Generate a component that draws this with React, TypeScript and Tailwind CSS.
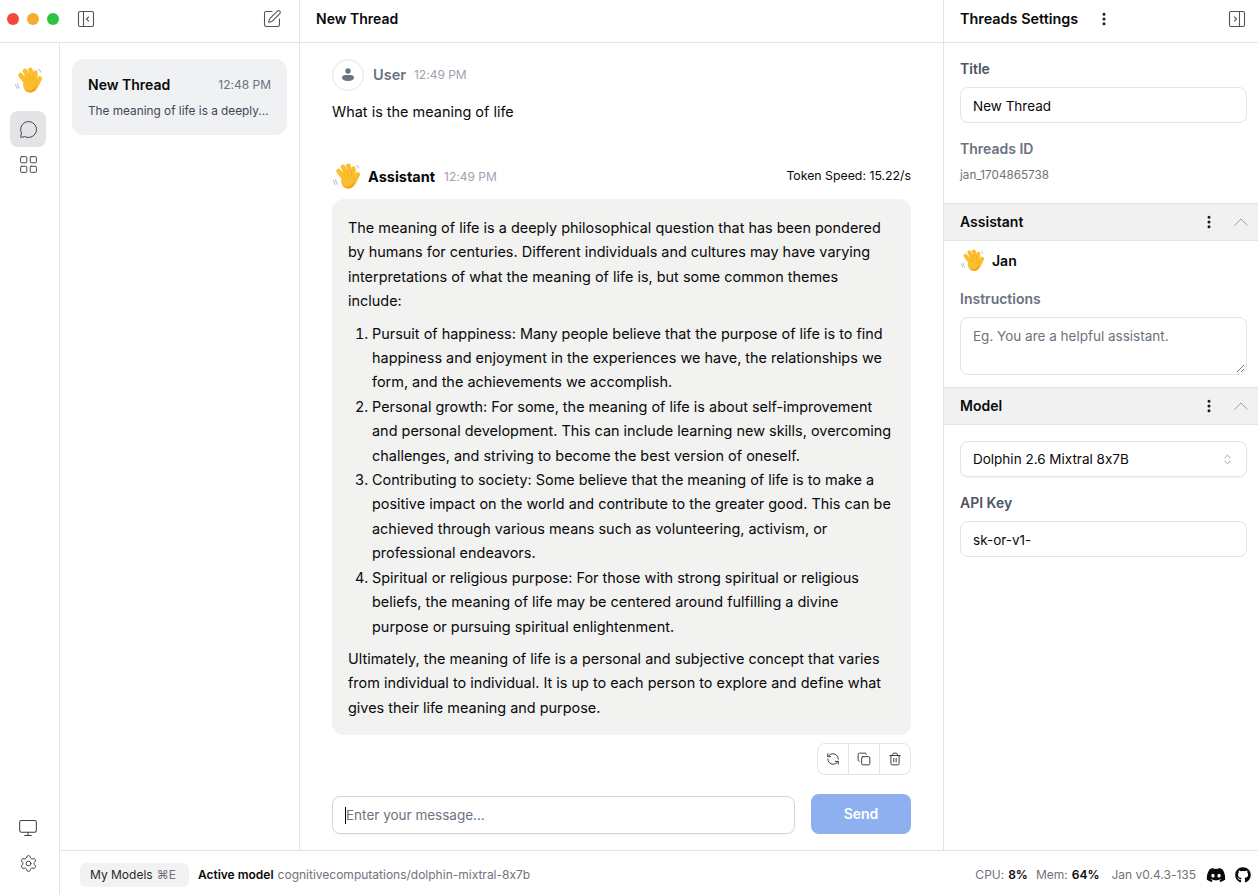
import {
  ChevronUp,
  ChevronsUpDown,
  Copy,
  EllipsisVertical,
  LayoutGrid,
  MessageCircle,
  Monitor,
  RefreshCcw,
  Settings,
  SquarePen,
  Trash2,
} from 'lucide-react'
import { FaDiscord, FaGithub } from 'react-icons/fa'

const ITEMS = [
  'Pursuit of happiness: Many people believe that the purpose of life is to find happiness and enjoyment in the experiences we have, the relationships we form, and the achievements we accomplish.',
  'Personal growth: For some, the meaning of life is about self-improvement and personal development. This can include learning new skills, overcoming challenges, and striving to become the best version of oneself.',
  'Contributing to society: Some believe that the meaning of life is to make a positive impact on the world and contribute to the greater good. This can be achieved through various means such as volunteering, activism, or professional endeavors.',
  'Spiritual or religious purpose: For those with strong spiritual or religious beliefs, the meaning of life may be centered around fulfilling a divine purpose or pursuing spiritual enlightenment.',
]

function WaveEmoji({ size }: { size: number }) {
  return (
    <svg width={size} height={size} viewBox="0 0 28 28" fill="none" className="shrink-0">
      <path d="M3.500 16.500c.2 1.800.8 3.300 1.800 4.600M1.500 17.500c.3 1.400.8 2.700 1.600 3.800M24.500 2.500c1.100.5 1.900 1.400 2.400 2.600" stroke="#b4c2cc" strokeWidth="1.100" strokeLinecap="round" />
      <g stroke="#fbbf2e" strokeWidth="4.600" strokeLinecap="round">
        <path d="M6.500 8l7.500 10" />
        <path d="M11 3.800l5 11" />
        <path d="M16.300 2.800l2.700 11" />
        <path d="M21.500 5.500l-.5 9" />
        <path d="M25.800 11.500l-3.500 7" />
      </g>
      <circle cx="16.500" cy="18" r="7.400" fill="#fbbf2e" />
      <path d="M22.800 18c.3 4-2.200 7.200-6.300 7.400-3 .1-5-1.300-6.200-3.200 2.500 1.500 6 1.700 8.700-.2 1.800-1.200 3-2.700 3.800-4z" fill="#f3a31c" />
      <path d="M10.500 9.500l3.800 5.500M14.400 7.500l2.500 6M19 7l.5 6M22.900 14.200l-.6 3" stroke="#eb9d1a" strokeWidth=".6" strokeLinecap="round" />
    </svg>
  )
}

function PanelIcon({ side }: { side: 'left' | 'right' }) {
  return (
    <svg width="18" height="18" viewBox="0 0 18 18" fill="none" stroke="#52525b" strokeWidth="1.100" strokeLinecap="round" strokeLinejoin="round">
      <rect x="1.500" y="1.500" width="15" height="15" rx="1.500" />
      {side === 'left' ? (
        <>
          <path d="M6.500 1.500v15" />
          <path d="M11.500 7l-2 2 2 2" />
        </>
      ) : (
        <>
          <path d="M11.500 1.500v15" />
          <path d="M6.500 7l2 2-2 2" />
        </>
      )}
    </svg>
  )
}

function SectionHeader({ title }: { title: string }) {
  return (
    <div className="flex h-[38px] items-center justify-between border-y border-[#e4e4e7] bg-[#f1f1f1] pl-4 pr-[5px]">
      <span className="text-sm font-semibold text-[#09090b]">{title}</span>
      <div className="flex items-center gap-3">
        <EllipsisVertical size={16} strokeWidth={2.500} className="text-[#18181b]" />
        <ChevronUp size={24} strokeWidth={1} className="text-[#a1a1aa]" />
      </div>
    </div>
  )
}

function ActionButton({ children, last }: { children: React.ReactNode; last?: boolean }) {
  return (
    <div className={`flex h-full items-center justify-center text-[#27272a] ${last ? 'w-[30px]' : 'w-[31px] border-r border-[#e4e4e7]'}`}>
      {children}
    </div>
  )
}

export default function App() {
  return (
    <div className="flex h-[894px] w-[1258px] flex-col overflow-hidden bg-white font-['Inter',sans-serif] text-[#09090b] [font-feature-settings:'calt'_0]">
      <header className="flex h-[43px] shrink-0 border-b border-[#e4e4e7]">
        <div className="flex w-[300px] items-center border-r border-[#e4e4e7] pb-1 pl-[7px] pr-[17px]">
          <div className="flex gap-2">
            <span className="h-3 w-3 rounded-full bg-[#f1483f]" />
            <span className="h-3 w-3 rounded-full bg-[#f6ac31]" />
            <span className="h-3 w-3 rounded-full bg-[#2cc443]" />
          </div>
          <div className="ml-[18px]">
            <PanelIcon side="left" />
          </div>
          <SquarePen size={20} strokeWidth={1.250} className="ml-auto text-[#52525b]" />
        </div>
        <div className="flex flex-1 items-center border-r border-[#e4e4e7] pb-1 pl-4 text-sm font-semibold">New Thread</div>
        <div className="flex w-[314px] items-center pb-1 pl-4 pr-3">
          <span className="text-[14.4px] font-semibold">Threads Settings</span>
          <EllipsisVertical size={16} strokeWidth={2.500} className="ml-[18px] text-[#18181b]" />
          <div className="ml-auto">
            <PanelIcon side="right" />
          </div>
        </div>
      </header>

      <div className="flex min-h-0 flex-1">
        <aside className="flex w-[60px] shrink-0 flex-col items-center border-r border-[#e4e4e7] pb-[21px] pr-[3px] pt-6">
          <WaveEmoji size={28} />
          <div className="mt-[16px] flex h-9 w-9 items-center justify-center rounded-lg bg-[#e4e4e7]">
            <MessageCircle size={19} strokeWidth={1.250} className="text-[#3f3f46]" />
          </div>
          <LayoutGrid size={21} strokeWidth={1.100} className="mt-[7px] text-[#3f3f46]" />
          <Monitor size={20} strokeWidth={1.250} className="mt-auto text-[#3f3f46]" />
          <Settings size={19} strokeWidth={1.250} className="mt-[16px] text-[#3f3f46]" />
        </aside>

        <div className="flex min-w-0 flex-1 flex-col">
          <div className="flex min-h-0 flex-1">
            <div className="w-[240px] shrink-0 border-r border-[#e4e4e7] px-3 pt-4">
              <div className="flex h-[76px] flex-col justify-center rounded-xl bg-[#f0f1f3] px-4">
                <div className="flex items-center justify-between pt-px">
                  <span className="text-sm font-semibold">New Thread</span>
                  <span className="text-xs text-[#6b7280]">12:48 PM</span>
                </div>
                <p className="mt-[8px] whitespace-nowrap text-[11.8px] text-[#3f4654]">The meaning of life is a deeply...</p>
              </div>
            </div>

            <main className="flex min-w-0 flex-1 flex-col border-r border-[#e4e4e7] pl-8 pr-8">
              <div className="flex items-center pt-[16px]">
                <div className="flex h-8 w-8 items-center justify-center rounded-full border border-[#e4e4e7]">
                  <svg width="14" height="16" viewBox="0 0 14 16" fill="#6b7280">
                    <circle cx="7" cy="4" r="2.700" />
                    <path d="M1 10.500C1 8.500 3 8 7 8s6 .5 6 2.500c0 2-2 3.500-6 3.500s-6-1.500-6-3.500z" />
                  </svg>
                </div>
                <span className="ml-[9px] text-[14.5px] font-semibold text-[#6b7280]">User</span>
                <span className="ml-2 text-xs text-[#9ca3af]">12:49 PM</span>
              </div>
              <p className="mt-[9px] text-[14.45px] leading-[24.5px]">What is the meaning of life</p>

              <div className="mt-[38px] flex items-center">
                <WaveEmoji size={28} />
                <span className="ml-2 text-[14.5px] font-bold">Assistant</span>
                <span className="ml-[9px] text-xs text-[#9ca3af]">12:49 PM</span>
                <span className="ml-auto text-[12.3px]">Token Speed: 15.22/s</span>
              </div>

              <div className="mt-2 rounded-xl bg-[#f2f2f0] px-4 pb-[14.5px] pt-[17.5px] text-[14.45px] leading-[24.4px]">
                <p className="pr-2">
                  The meaning of life is a deeply philosophical question that has been pondered by humans for centuries.
                  Different individuals and cultures may have varying interpretations of what the meaning of life is, but
                  some common themes include:
                </p>
                <ol className="mb-2 mt-2 list-decimal pl-6">
                  {ITEMS.map((item) => (
                    <li key={item}>{item}</li>
                  ))}
                </ol>
                <p>
                  Ultimately, the meaning of life is a personal and subjective concept that varies from individual to
                  individual. It is up to each person to explore and define what gives their life meaning and purpose.
                </p>
              </div>

              <div className="mt-2 flex justify-end">
                <div className="flex h-8 overflow-hidden rounded-lg border border-[#e4e4e7]">
                  <ActionButton>
                    <RefreshCcw size={14} strokeWidth={1.500} />
                  </ActionButton>
                  <ActionButton>
                    <Copy size={14} strokeWidth={1.500} />
                  </ActionButton>
                  <ActionButton last>
                    <Trash2 size={14} strokeWidth={1.500} />
                  </ActionButton>
                </div>
              </div>

              <div className="mt-[19px] flex items-end gap-4">
                <div className="flex h-[38px] flex-1 items-center rounded-lg border border-[#d4d4d8] px-3 pt-px text-[13.5px] text-[#6b7280] shadow-[0_1px_1px_rgba(0,0,0,0.04)]">
                  <span className="h-[17px] w-px bg-[#09090b]" />
                  Enter your message...
                </div>
                <div className="flex h-[40px] w-[100px] items-center justify-center rounded-lg bg-[#8fb0f0] text-sm font-semibold text-white">
                  Send
                </div>
              </div>
            </main>

            <div className="w-[314px] shrink-0">
              <div className="pl-4 pr-[11px] pt-4">
                <div className="text-sm font-semibold leading-5 text-[#4b5563]">Title</div>
                <div className="mt-[8px] flex h-[36px] items-center rounded-lg border border-[#e4e4e7] px-3 pt-[2px] text-[13.5px]">New Thread</div>
                <div className="mt-4 text-sm font-semibold leading-5 text-[#6b7280]">Threads ID</div>
                <div className="mt-[6px] text-[11.7px] leading-5 text-[#71717a]">jan_1704865738</div>
              </div>
              <div className="mt-[18px]">
                <SectionHeader title="Assistant" />
              </div>
              <div className="pl-4 pr-[11px]">
                <div className="flex h-[40px] items-center gap-2">
                  <WaveEmoji size={24} />
                  <span className="text-sm font-semibold">Jan</span>
                </div>
                <div className="mt-2 text-sm font-semibold leading-5 text-[#6b7280]">Instructions</div>
                <div className="relative mt-2 h-[58px] rounded-lg border border-[#e4e4e7] px-3 pt-[8px] text-[13.5px] text-[#6b7280]">
                  Eg. You are a helpful assistant.
                  <svg width="9" height="9" viewBox="0 0 9 9" className="absolute bottom-px right-px" stroke="#52525b" strokeWidth=".8">
                    <path d="M1 8l7-7M5 8l3-3" />
                  </svg>
                </div>
              </div>
              <div className="mt-3">
                <SectionHeader title="Model" />
              </div>
              <div className="pl-4 pr-[11px] pt-4">
                <div className="flex h-[36px] items-center justify-between rounded-lg border border-[#e4e4e7] px-3 text-[13.5px] shadow-[0_1px_2px_rgba(0,0,0,0.05)]">
                  Dolphin 2.6 Mixtral 8x7B
                  <ChevronsUpDown size={13} strokeWidth={1.250} className="text-[#71717a]" />
                </div>
                <div className="mt-4 text-sm font-semibold leading-5 text-[#4b5563]">API Key</div>
                <div className="mt-[8px] flex h-[36px] items-center rounded-lg border border-[#e4e4e7] px-3 pt-[2px] text-[13.5px]">sk-or-v1-</div>
              </div>
            </div>
          </div>

          <footer className="flex h-[44px] shrink-0 items-center border-t border-[#e4e4e7] pl-5 pr-[7px] pt-1 text-xs">
            <div className="flex h-6 items-center rounded-md bg-[#f2f2f2] pl-[10px] pr-[13px] text-[#27272a]">
              My Models <span className="ml-1 text-[#71717a]">⌘E</span>
            </div>
            <span className="ml-[9px] font-semibold">Active model</span>
            <span className="ml-1 text-xs text-[#71717a]">cognitivecomputations/dolphin-mixtral-8x7b</span>
            <div className="ml-auto flex items-center">
              <span className="text-[#71717a]">CPU:</span>
              <span className="ml-1 font-semibold">8%</span>
              <span className="ml-2 text-[#71717a]">Mem:</span>
              <span className="ml-1 font-semibold">64%</span>
              <span className="ml-3 text-[#71717a]">Jan v0.4.3-135</span>
              <FaDiscord size={20} className="ml-[10px] text-[#09090b]" />
              <FaGithub size={16} className="ml-[9px] text-[#09090b]" />
            </div>
          </footer>
        </div>
      </div>
    </div>
  )
}
